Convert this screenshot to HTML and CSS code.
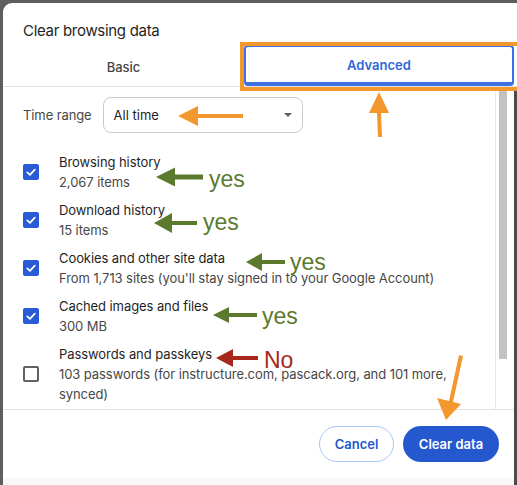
FILE: index.html
```html
<!DOCTYPE html>
<html>
<head>
<meta charset="utf-8">
<link rel="stylesheet" href="styles.css">
</head>
<body>
<div class="page">
  <div class="dialog">
    <div class="title">Clear browsing data</div>
    <div class="tabs">
      <div class="tab tab-basic">Basic</div>
      <div class="tab tab-adv"><div class="adv-ring">Advanced</div></div>
    </div>
    <div class="lower">
      <div class="body">
        <div class="scroll">
          <div class="range-row">
            <span class="range-label">Time range</span>
            <div class="select">
              <span>All time</span>
              <svg class="caret" width="8" height="4" viewBox="0 0 8 4"><path d="M0 0H8L4 4Z" fill="#5f5f5f"/></svg>
            </div>
          </div>
          <div class="item">
            <div class="cb on"><svg width="16" height="16" viewBox="0 0 16 16"><path d="M4.3 8.3 6.9 10.8 11.8 5.6" fill="none" stroke="#fff" stroke-width="1.7" stroke-linecap="round" stroke-linejoin="round"/></svg></div>
            <div class="text"><div class="t1">Browsing history</div><div class="t2">2,067 items</div></div>
          </div>
          <div class="item">
            <div class="cb on"><svg width="16" height="16" viewBox="0 0 16 16"><path d="M4.3 8.3 6.9 10.8 11.8 5.6" fill="none" stroke="#fff" stroke-width="1.7" stroke-linecap="round" stroke-linejoin="round"/></svg></div>
            <div class="text"><div class="t1">Download history</div><div class="t2">15 items</div></div>
          </div>
          <div class="item">
            <div class="cb on"><svg width="16" height="16" viewBox="0 0 16 16"><path d="M4.3 8.3 6.9 10.8 11.8 5.6" fill="none" stroke="#fff" stroke-width="1.7" stroke-linecap="round" stroke-linejoin="round"/></svg></div>
            <div class="text"><div class="t1">Cookies and other site data</div><div class="t2">From 1,713 sites (you'll stay signed in to your Google Account)</div></div>
          </div>
          <div class="item">
            <div class="cb on"><svg width="16" height="16" viewBox="0 0 16 16"><path d="M4.3 8.3 6.9 10.8 11.8 5.6" fill="none" stroke="#fff" stroke-width="1.7" stroke-linecap="round" stroke-linejoin="round"/></svg></div>
            <div class="text"><div class="t1">Cached images and files</div><div class="t2">300 MB</div></div>
          </div>
          <div class="item">
            <div class="cb off"></div>
            <div class="text"><div class="t1">Passwords and passkeys</div><div class="t2">103 passwords (for instructure.com, pascack.org, and 101 more, synced)</div></div>
          </div>
        </div>
        <div class="scrollbar"><div class="thumb"></div></div>
      </div>
      <div class="footer">
        <button class="btn btn-cancel">Cancel</button>
        <button class="btn btn-clear">Clear data</button>
      </div>
      <div class="band"></div>
    </div>
  </div>

  <svg class="annot" width="517" height="485" viewBox="0 0 517 485">
    <!-- orange highlight box -->
    <rect x="242" y="44" width="277" height="45" fill="none" stroke="#f2982f" stroke-width="4"/>
    <!-- orange left arrow at time range -->
    <polygon points="178,116 198,106 198,114 243,114 243,118 198,118 198,126" fill="#f2982f"/>
    <!-- orange up arrow -->
    <polygon points="379,92 389,113 381,113 382,137 378,137 377,113 369,113" fill="#f2982f"/>
    <!-- orange down arrow near clear data -->
    <polygon points="459,355 463,356 453,402 461,404 446,420 437,398 449,401" fill="#f2982f"/>
    <!-- green arrows -->
    <g fill="#5b7a2e">
      <polygon points="156,177 175,167.5 175,174.5 203,174.5 203,179.5 175,179.5 175,186.5"/>
      <polygon points="154,223 172,213 172,221 197,221 197,225 172,225 172,233"/>
      <polygon points="246,262 262,253 262,260 285,260 285,264 262,264 262,271"/>
      <polygon points="213,315 229,307 229,313 257,313 257,317 229,317 229,323"/>
    </g>
    <polygon points="216,358 233,349 233,356 258,356 258,360 233,360 233,367" fill="#a7291c"/>
    <g class="annot-text" fill="#5b7a2e">
      <text x="209" y="187">yes</text>
      <text x="203" y="230">yes</text>
      <text x="290" y="270">yes</text>
      <text x="262" y="324">yes</text>
    </g>
    <text class="annot-text" x="264" y="368" fill="#a7291c">No</text>
  </svg>
</div>
</body>
</html>
```

FILE: styles.css
```css
html, body {
  margin: 0;
  padding: 0;
}
body {
  background: #5e5e5e;
  width: 517px;
  height: 485px;
  overflow: hidden;
  font-family: "Inter", "Liberation Sans", sans-serif;
  color: #1f1f1f;
}
.page {
  position: relative;
  width: 517px;
  height: 485px;
  padding: 3px 0 0 3px;
  box-sizing: border-box;
}
.dialog {
  width: 514px;
  height: 482px;
  background: #fff;
  border-top-left-radius: 9px;
  overflow: hidden;
  display: flex;
  flex-direction: column;
}
.title {
  padding: 18px 20px 0;
  font-size: 15px;
  letter-spacing: -0.3px;
  line-height: 20px;
  height: 20px;
}
.tabs {
  display: flex;
  height: 45px;
  border-bottom: 1px solid #e2e2e2;
}
.tab {
  font-size: 13px;
  font-weight: 500;
  display: flex;
  align-items: center;
  justify-content: center;
}
.tab-basic {
  width: 241px;
  padding-top: 6px;
  box-sizing: border-box;
  color: #474747;
}
.tab-adv {
  flex: 1;
  padding: 4px 3px 0 0;
  align-items: stretch;
}
.adv-ring {
  flex: 1;
  display: flex;
  align-items: center;
  justify-content: center;
  border: 2px solid #3b74e2;
  border-bottom-width: 4px;
  border-radius: 4px;
  color: #2e68d9;
  font-weight: 600;
}
.lower {
  flex: 1;
  display: flex;
  flex-direction: column;
  border-right: 3px solid #4b4b4b;
}
.body {
  display: flex;
  height: 322px;
}
.scroll {
  flex: 1;
  padding: 10px 20px 0 20px;
  overflow: hidden;
}
.range-row {
  display: flex;
  align-items: center;
  gap: 11px;
  margin-bottom: 15px;
}
.range-label {
  font-size: 13px;
  letter-spacing: -0.1px;
  color: #474747;
}
.select {
  width: 200px;
  height: 36px;
  box-sizing: border-box;
  border: 1px solid #c9c9c9;
  border-radius: 8px;
  display: flex;
  align-items: center;
  justify-content: space-between;
  padding: 0 10px 0 10px;
  font-size: 13px;
  color: #1f1f1f;
}
.caret {
  display: block;
}
.item {
  display: flex;
  align-items: center;
  padding: 4px 0;
}
.cb {
  width: 16px;
  height: 16px;
  box-sizing: border-box;
  border-radius: 2px;
  flex: none;
  margin-right: 20px;
}
.cb svg {
  display: block;
}
.cb.on {
  background: #2a5bd7;
}
.cb.off {
  border: 2px solid #5f6368;
}
.text {
  font-size: 13px;
  line-height: 20px;
  letter-spacing: -0.08px;
}
.t1 {
  color: #1f1f1f;
}
.t2 {
  color: #474747;
}
.scrollbar {
  width: 13px;
  border-left: 1px solid #e6e6e6;
  display: flex;
  padding: 0 2px 0 3px;
}
.thumb {
  width: 8px;
  height: 272px;
  background: #c2c2c2;
}
.footer {
  border-top: 1px solid #e2e2e2;
  display: flex;
  justify-content: flex-end;
  gap: 9px;
  padding: 16px 15px 16px 0;
}
.btn {
  height: 36px;
  border-radius: 18px;
  font-family: "Inter", "Liberation Sans", sans-serif;
  font-size: 13px;
  font-weight: 600;
  padding: 0;
  cursor: pointer;
}
.btn-cancel {
  width: 75px;
  background: #fff;
  border: 1px solid #a8c7fa;
  color: #2358cc;
}
.btn-clear {
  width: 96px;
  background: #2558cf;
  border: none;
  color: #fff;
}
.band {
  flex: 1;
  background: #f8f8f8;
}
.annot {
  position: absolute;
  left: 0;
  top: 0;
  pointer-events: none;
}
.annot-text {
  font-family: "Liberation Sans", sans-serif;
  font-size: 23px;
}
```
